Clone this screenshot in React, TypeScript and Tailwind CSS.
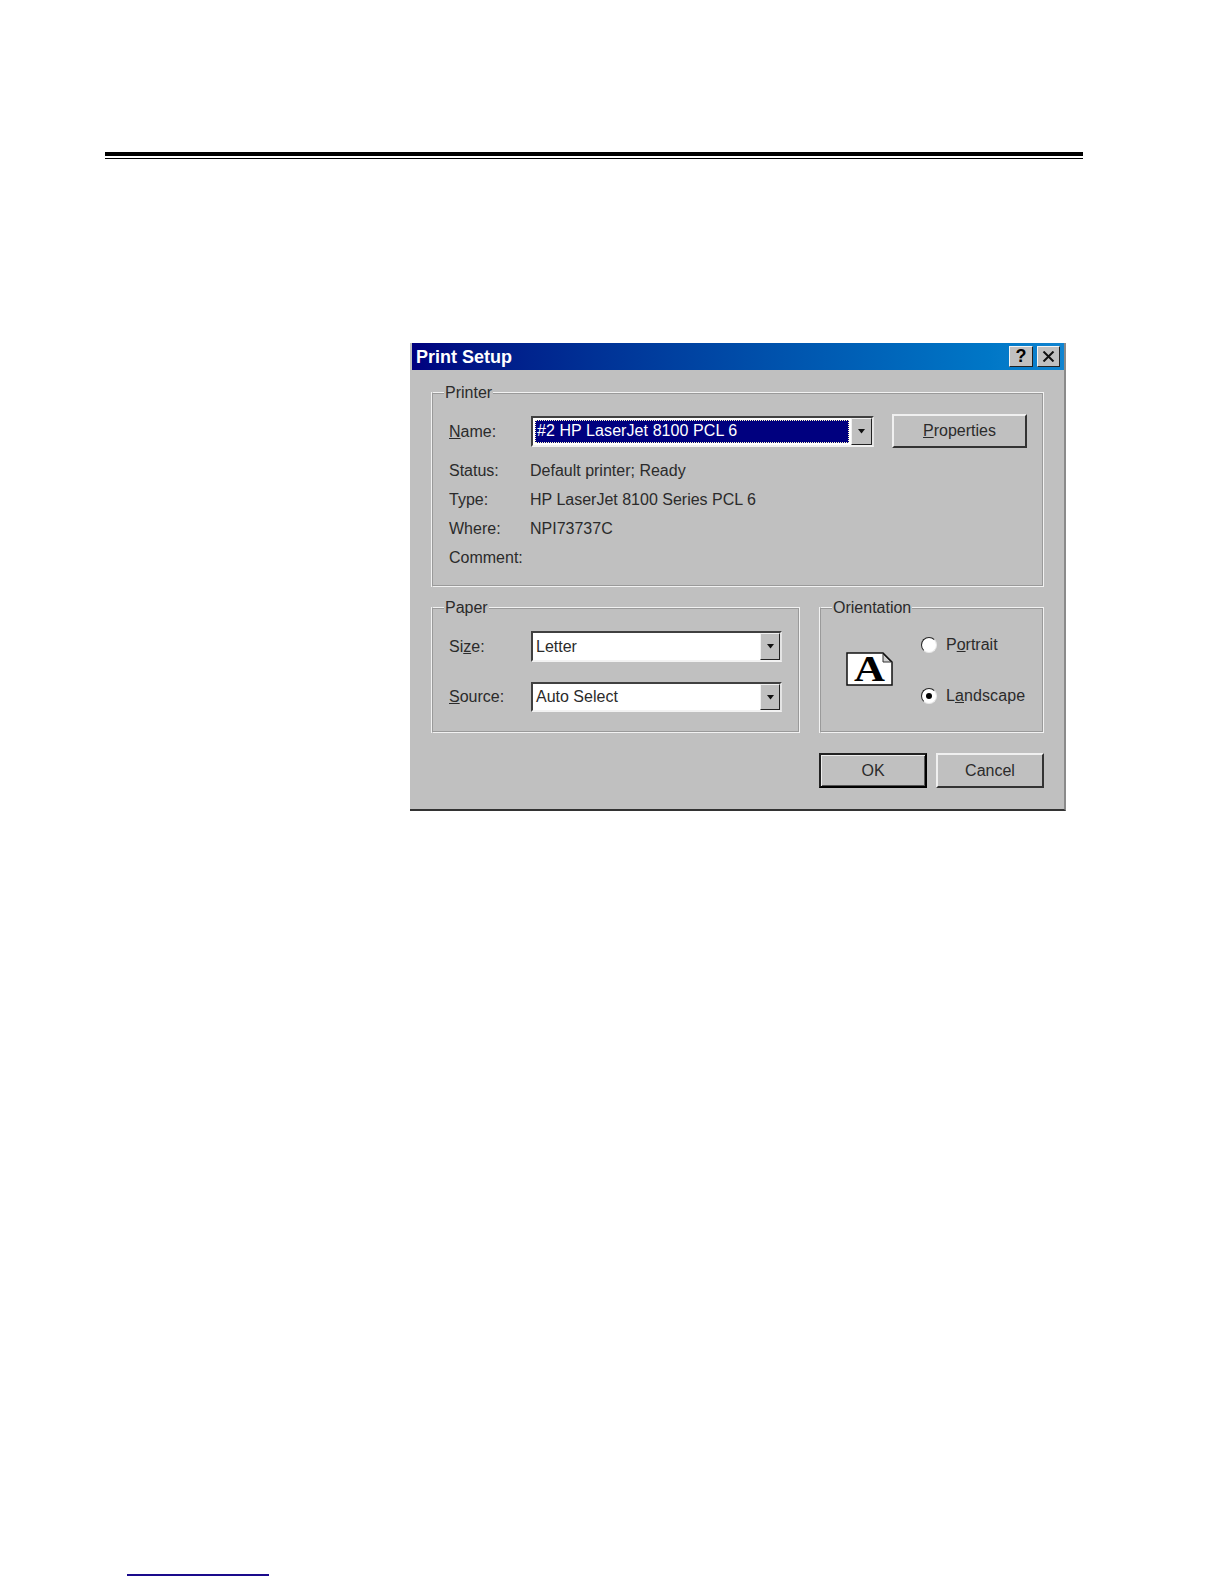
const font = "font-['Liberation_Sans',Arial,sans-serif]";

const Group = ({ title, className, children }: { title: string; className: string; children: React.ReactNode }) => (
  <div className={`relative border border-t-[#f2f2f2] border-l-[#9a9a9a] border-r-[#f2f2f2] border-b-[#f2f2f2] shadow-[inset_0_1px_0_#9a9a9a,inset_-1px_-1px_0_#9a9a9a,-1px_0_0_#f2f2f2] ${className}`}>
    <span className="absolute -top-[10px] left-[11px] bg-[#c0c0c0] px-[1px] text-[16px] leading-[20px]">{title}</span>
    {children}
  </div>
);

const Combo = ({ value, selected, arrow, className }: { value: string; selected?: boolean; arrow: string; className: string }) => (
  <div className={`flex border-2 border-t-[#404040] border-l-[#404040] border-r-[#e4e4e4] border-b-[#f2f2f2] ${className}`}>
    <div className={`flex min-w-0 flex-1 items-center ${selected ? 'bg-white p-[2px]' : 'bg-white pl-[3px]'}`}>
      {selected ? (
        <span className="flex h-full w-full items-center border border-dotted border-[#fff8c8] bg-[#00007f] pl-[1px] text-[16px] tracking-[0.08px] text-white">{value}</span>
      ) : (
        <span className="text-[16px]">{value}</span>
      )}
    </div>
    <div className={`flex items-center justify-center border border-t-[#f0f0f0] border-l-[#f0f0f0] border-r-[#222222] border-b-[#222222] bg-[#c0c0c0] ${arrow}`}>
      <svg width="9" height="5" viewBox="0 0 9 5"><path d="M1 0h7L4.500 4.500z" fill="#111" /></svg>
    </div>
  </div>
);

const Button = ({ children, primary, className }: { children: React.ReactNode; primary?: boolean; className: string }) => (
  <div className={`flex items-center justify-center text-[16px] ${primary ? 'border-2 border-t-[#222222] border-l-[#222222] border-r-[#000000] border-b-[#000000] shadow-[inset_1px_1px_0_#eeeeee,inset_-1px_-1px_0_#555555]' : 'border-2 border-t-[#f0f0f0] border-l-[#f0f0f0] border-r-[#333333] border-b-[#333333]'} ${className}`}>
    {children}
  </div>
);

const Radio = ({ checked }: { checked?: boolean }) => (
  <span className="flex h-[16px] w-[16px] items-center justify-center rounded-full border border-t-[#222222] border-l-[#222222] border-r-[#e8e8e8] border-b-[#e8e8e8] bg-white">
    {checked && <span className="h-[6px] w-[6px] rounded-full bg-black" />}
  </span>
);

const InfoRow = ({ label, value }: { label: string; value?: string }) => (
  <div className="flex h-[29px] items-center">
    <span className="w-[81px]">{label}</span>
    <span>{value}</span>
  </div>
);

const TitleButton = ({ className, children }: { className: string; children: React.ReactNode }) => (
  <span className={`flex h-[21px] items-center justify-center border border-t-[#f4f4f4] border-l-[#f4f4f4] border-r-[#222222] border-b-[#222222] bg-[#c0c0c0] ${className}`}>
    {children}
  </span>
);

export default function App() {
  return (
    <div className={`${font} min-h-[1584px] bg-white pt-[152px] text-[16px] text-[#2b2b2b]`}>
      <div className="mx-[105px] w-[978px]">
        <div className="h-[4px] bg-black" />
        <div className="mt-[2px] h-[1px] bg-black" />
      </div>

      <div className="ml-[410px] mt-[184px] flex h-[468px] w-[656px] flex-col border-r-2 border-b-2 border-r-[#8a8a8a] border-b-[#333333] bg-[#c0c0c0] pl-[2px]">
        <div className="flex h-[27px] items-center justify-between bg-gradient-to-r from-[#00007f] to-[#1084d0] pl-[4px] pr-[4px]">
          <span className="mt-[1px] text-[18px] font-bold text-white">Print Setup</span>
          <div className="flex gap-[4px]">
            <TitleButton className="w-[24px] text-[18px] font-bold text-black">?</TitleButton>
            <TitleButton className="w-[23px]">
              <svg width="13" height="11" viewBox="0 0 13 11"><path d="M1.500 0.500l10 10M11.500 0.500l-10 10" stroke="#111" strokeWidth="2" /></svg>
            </TitleButton>
          </div>
        </div>

        <div className="flex flex-col pl-[20px] pr-[20px] pt-[22px]">
          <Group title="Printer" className="h-[195px] w-[612px] pl-[16px] pt-[21px]">
            <div className="flex items-center">
              <span className="mt-[2px] w-[82px]"><u>N</u>ame:</span>
              <Combo value="#2 HP LaserJet 8100 PCL 6" selected arrow="w-[21px]" className="h-[31px] w-[343px]" />
              <Button className="ml-[18px] h-[34px] w-[135px]"><span><u>P</u>roperties</span></Button>
            </div>
            <div className="mt-[8px] flex flex-col">
              <InfoRow label="Status:" value="Default printer; Ready" />
              <InfoRow label="Type:" value="HP LaserJet 8100 Series PCL 6" />
              <InfoRow label="Where:" value="NPI73737C" />
              <InfoRow label="Comment:" />
            </div>
          </Group>

          <div className="mt-[20px] flex gap-[20px]">
            <Group title="Paper" className="h-[126px] w-[368px] pl-[16px] pt-[23px]">
              <div className="flex items-center">
                <span className="w-[82px]">Si<u>z</u>e:</span>
                <Combo value="Letter" arrow="w-[20px]" className="h-[31px] w-[251px]" />
              </div>
              <div className="mt-[20px] flex items-center">
                <span className="w-[82px]"><u>S</u>ource:</span>
                <Combo value="Auto Select" arrow="w-[20px]" className="h-[30px] w-[251px]" />
              </div>
            </Group>

            <Group title="Orientation" className="flex h-[126px] w-[224px] items-center pl-[25px]">
              <svg width="47" height="34" viewBox="0 0 47 34" className="mt-[-2px] overflow-visible">
                <path d="M1 1h36l9 9v23H1z" fill="#fff" stroke="#111" strokeWidth="1.500" />
                <path d="M37 2v8h8z" fill="#d0d0d0" stroke="#333" />
                <text x="8" y="29" textLength="31" lengthAdjust="spacingAndGlyphs" fontFamily="'Liberation Serif',serif" fontWeight="700" fontSize="36" fill="#000">A</text>
              </svg>
              <div className="ml-[28px] flex flex-col gap-[27px]">
                <label className="flex items-center gap-[9px]"><Radio /><span>P<u>o</u>rtrait</span></label>
                <label className="flex items-center gap-[9px]"><Radio checked /><span className="tracking-[0.1px]">L<u>a</u>ndscape</span></label>
              </div>
            </Group>
          </div>

          <div className="mt-[20px] flex w-[612px] justify-end gap-[9px]">
            <Button primary className="h-[35px] w-[108px]">OK</Button>
            <Button className="h-[35px] w-[108px]">Cancel</Button>
          </div>
        </div>
      </div>

      <div className="ml-[127px] mt-[763px] h-[2px] w-[142px] bg-[#1a0a8c]" />
    </div>
  );
}
